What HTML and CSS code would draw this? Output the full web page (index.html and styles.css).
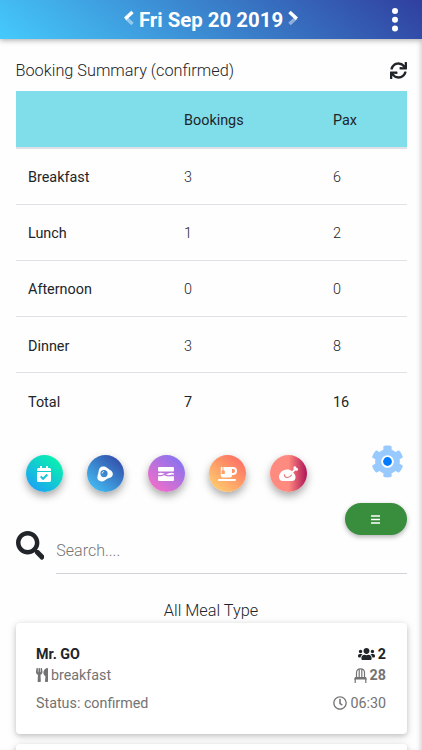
FILE: index.html
```html
<!DOCTYPE html>
<html lang="en">
<head>
    <meta charset="UTF-8">
    <meta name="viewport" content="width=device-width, initial-scale=1.0">
    <title>Booking Summary</title>
    <link rel="stylesheet" href="styles.css">
</head>
<body>
    <header class="topbar">
        <div class="date-nav">
            <svg class="chevron" viewBox="0 0 10 16"><path class="faded" d="M2 8l6.500 6" /><path d="M8.500 2 1.200 8.800" /></svg>
            <h1>Fri Sep 20 2019</h1>
            <svg class="chevron" viewBox="0 0 10 16"><path class="faded" d="M8 8l-6.500 6" /><path d="M1.500 2 8.800 8.800" /></svg>
        </div>
        <svg class="menu-dots" viewBox="0 0 6 24"><circle cx="3" cy="3" r="3" /><circle cx="3" cy="11.8" r="3" /><circle cx="3" cy="20.6" r="3" /></svg>
    </header>

    <main class="content">
        <div class="summary-head">
            <span>Booking Summary (confirmed)</span>
            <svg class="sync" viewBox="0 0 512 512"><path d="M440.65 12.57l4 82.77A247.16 247.16 0 0 0 255.83 8C134.73 8 33.91 94.92 12.29 209.82A12 12 0 0 0 24.09 224h49.05a12 12 0 0 0 11.67-9.26 175.91 175.91 0 0 1 317-56.94l-101.46-4.86a12 12 0 0 0-12.57 12v47.41a12 12 0 0 0 12 12H500a12 12 0 0 0 12-12V12a12 12 0 0 0-12-12h-47.37a12 12 0 0 0-11.98 12.57zM255.83 432a175.61 175.61 0 0 1-146-77.8l101.8 4.87a12 12 0 0 0 12.57-12v-47.4a12 12 0 0 0-12-12H12a12 12 0 0 0-12 12V500a12 12 0 0 0 12 12h47.35a12 12 0 0 0 12-12.6l-4.15-82.57A247.17 247.17 0 0 0 255.83 504c121.11 0 221.93-86.92 243.55-201.82a12 12 0 0 0-11.8-14.18h-49.05a12 12 0 0 0-11.67 9.26A175.86 175.86 0 0 1 255.83 432z" /></svg>
        </div>

        <table class="summary">
            <thead>
                <tr><th></th><th>Bookings</th><th>Pax</th></tr>
            </thead>
            <tbody>
                <tr><th>Breakfast</th><td>3</td><td>6</td></tr>
                <tr><th>Lunch</th><td>1</td><td>2</td></tr>
                <tr><th>Afternoon</th><td>0</td><td>0</td></tr>
                <tr><th>Dinner</th><td>3</td><td>8</td></tr>
                <tr><th>Total</th><th>7</th><th>16</th></tr>
            </tbody>
        </table>

        <div class="actions">
            <div class="filters">
                <button class="round all">
                    <svg width="14" height="16" viewBox="0 0 448 512"><path d="M436 160H12c-6.627 0-12-5.373-12-12v-36c0-26.51 21.49-48 48-48h48V12c0-6.627 5.373-12 12-12h40c6.627 0 12 5.373 12 12v52h128V12c0-6.627 5.373-12 12-12h40c6.627 0 12 5.373 12 12v52h48c26.51 0 48 21.49 48 48v36c0 6.627-5.373 12-12 12zM12 192h424c6.627 0 12 5.373 12 12v260c0 26.51-21.49 48-48 48H48c-26.51 0-48-21.49-48-48V204c0-6.627 5.373-12 12-12zm333.296 95.947l-28.169-28.398c-4.667-4.705-12.265-4.736-16.97-.068L194.12 364.665l-45.98-46.352c-4.667-4.705-12.266-4.736-16.971-.068l-28.397 28.17c-4.705 4.667-4.736 12.265-.068 16.97l82.601 83.269c4.667 4.705 12.265 4.736 16.97.068l142.953-141.805c4.705-4.667 4.736-12.265.068-16.97z" /></svg>
                </button>
                <button class="round breakfast">
                    <svg width="16" height="16" viewBox="0 0 16 16"><path fill-rule="evenodd" d="M3.2 1.6C4.3.4 6.300 0 8.300.8c2 .8 2.600 2 4.700 3.200 2 1.100 3 2.500 2.800 4.500-.2 2-1.500 3-3.600 3.500-2.200.5-3 1.300-4.600 2.500C5.600 16 2.200 15.700.8 13.300-.3 11.300.8 9.200 1.300 7.200 1.800 5 1.800 3.100 3.200 1.600zM7 4a3.600 3.600 0 1 0 0 7.200A3.600 3.600 0 0 0 7 4z" /><path class="shine" d="M5.200 7.500c0-1.200.7-1.900 1.900-1.900" /></svg>
                </button>
                <button class="round lunch">
                    <svg width="16" height="14" viewBox="0 0 16 14"><rect width="16" height="4.600" rx="1" /><path d="M0 6.500c1.500-1 3.600-.9 5.200-.2 1.800.8 3.800.8 5.600 0 1.700-.7 3.600-.8 5.200.2v1.200c-1.200-.3-2-.4-3 .1-1.800.9-3.300.2-5-.5-1.600-.6-2.600 0-4 .5C2.600 8.300 1.200 8 0 7.800z" /><path d="M0 9.200h3.500l2.500-1 3 1 2.500.4 2-.4H16V13a1 1 0 0 1-1 1H1a1 1 0 0 1-1-1z" /></svg>
                </button>
                <button class="round tea">
                    <svg width="19" height="14" viewBox="0 0 19 14"><path fill-rule="evenodd" d="M2.800 0h1.700v2.900L3.500 4.100v3h3.300v-3L5.400 2.900V0H15a4 4 0 0 1 0 8h-1v.500a2 2 0 0 1-2 2H4.800a2 2 0 0 1-2-2zM14 2v4h1a2 2 0 0 0 0-4z" /><rect y="12" width="18" height="1.900" rx=".9" /></svg>
                </button>
                <button class="round dinner">
                    <svg width="19" height="15" viewBox="0 0 19 15"><path d="M0 10.800C.2 6.500 4 3.400 8 3.400c2.200 0 3.700.6 5 1.800l1.700-1.700C14 1.800 14.600.3 15.800.3c.9 0 1.400.6 1.400 1.400 1.200-.1 1.800.7 1.800 1.500 0 1.300-1.400 2-2.900 1.400l-1.900 2.200c1.500 1.300 2.300 2.700 2.300 4.400 0 2.300-1.200 3.800-3.500 3.800H3.600C1.400 15-.1 13.300 0 10.800z" /><path class="wing" d="M5.200 8.300c.3 3.900 4.800 4.500 7.600.5" /></svg>
                </button>
            </div>
            <svg class="cog" viewBox="0 0 512 512"><path d="M487.4 315.7l-42.600-24.600c4.300-23.200 4.300-47 0-70.200l42.600-24.600c4.900-2.800 7.100-8.600 5.500-14-11.100-35.600-30-67.800-54.700-94.600-3.800-4.100-10-5.100-14.800-2.300L380.800 110c-17.900-15.400-38.500-27.300-60.800-35.100V25.800c0-5.600-3.900-10.500-9.400-11.700-36.700-8.200-74.300-7.800-109.200 0-5.500 1.200-9.400 6.100-9.400 11.700V75c-22.200 7.900-42.800 19.800-60.800 35.100L88.700 85.500c-4.900-2.800-11-1.900-14.800 2.300-24.700 26.700-43.600 58.900-54.700 94.600-1.700 5.400.6 11.200 5.500 14L67.300 221c-4.300 23.200-4.300 47 0 70.200l-42.600 24.600c-4.900 2.800-7.100 8.600-5.500 14 11.100 35.600 30 67.800 54.700 94.600 3.800 4.100 10 5.100 14.800 2.300l42.600-24.600c17.900 15.400 38.500 27.300 60.800 35.100v49.200c0 5.600 3.900 10.500 9.400 11.700 36.700 8.200 74.300 7.800 109.200 0 5.500-1.200 9.400-6.100 9.400-11.700v-49.200c22.200-7.900 42.800-19.800 60.800-35.100l42.600 24.600c4.900 2.800 11 1.900 14.800-2.300 24.700-26.700 43.600-58.900 54.700-94.600 1.500-5.500-.7-11.300-5.600-14.100z" /><circle class="ring" cx="256" cy="256" r="98" /><circle class="dot" cx="256" cy="256" r="68" /></svg>
        </div>

        <div class="list-button-row">
            <button class="list-button">
                <svg width="9" height="9" viewBox="0 0 9 9"><path d="M0 1h9M0 4.500h9M0 8h9" /></svg>
            </button>
        </div>

        <div class="search">
            <svg class="search-icon" viewBox="0 0 512 512"><path d="M505 442.700L405.300 343c-4.500-4.500-10.600-7-17-7H372c27.600-35.300 44-79.700 44-128C416 93.100 322.900 0 208 0S0 93.100 0 208s93.100 208 208 208c48.300 0 92.700-16.400 128-44v16.300c0 6.400 2.500 12.500 7 17l99.700 99.700c9.400 9.400 24.600 9.400 33.900 0l28.300-28.300c9.400-9.400 9.400-24.600.1-34zM208 336c-70.700 0-128-57.200-128-128 0-70.700 57.200-128 128-128 70.700 0 128 57.200 128 128 0 70.700-57.200 128-128 128z" /></svg>
            <input type="text" placeholder="Search....">
        </div>

        <h2 class="meal-title">All Meal Type</h2>

        <div class="card">
            <div class="card-row name">
                <span>Mr. GO</span>
                <span class="value"><svg width="17" height="14" viewBox="0 0 640 512"><path d="M96 224c35.300 0 64-28.700 64-64s-28.700-64-64-64-64 28.700-64 64 28.700 64 64 64zm448 0c35.300 0 64-28.700 64-64s-28.700-64-64-64-64 28.700-64 64 28.700 64 64 64zm32 32h-64c-17.600 0-33.500 7.100-45.100 18.600 40.300 22.100 68.900 62 75.100 109.400h66c17.700 0 32-14.300 32-32v-32c0-35.300-28.700-64-64-64zm-256 0c61.900 0 112-50.100 112-112S381.900 32 320 32 208 82.100 208 144s50.100 112 112 112zm76.800 32h-8.300c-20.800 10-43.900 16-68.500 16s-47.600-6-68.500-16h-8.300C179.600 288 128 339.600 128 403.200V432c0 26.500 21.500 48 48 48h288c26.500 0 48-21.500 48-48v-28.800c0-63.600-51.600-115.200-115.200-115.200zm-223.700-13.400C161.500 263.100 145.600 256 128 256H64c-35.300 0-64 28.700-64 64v32c0 17.700 14.300 32 32 32h65.900c6.300-47.400 34.900-87.300 75.200-109.400z" /></svg>2</span>
            </div>
            <div class="card-row meal">
                <span class="value"><svg width="12" height="14" viewBox="0 0 416 512" preserveAspectRatio="none"><path d="M207.900 15.200c.8 4.700 16.100 94.500 16.100 128.800 0 52.300-27.800 89.600-68.900 104.600L168 486.700c.7 13.700-10.200 25.300-24 25.300H80c-13.700 0-24.700-11.500-24-25.300l12.900-238.100C27.700 233.600 0 196.200 0 144 0 109.600 15.300 19.900 16.100 15.200 19.300-5.100 61.400-5.400 64 16.300v141.200c1.300 3.400 15.100 3.200 16 0 1.400-25.300 7.900-139.200 8-141.800 3.300-20.800 44.700-20.800 47.900 0 .2 2.700 6.600 116.500 8 141.800.9 3.200 14.800 3.400 16 0V16.300c2.600-21.600 44.800-21.400 48-1.100zm119.200 285.700l-15 185.100c-1.200 14 9.900 26 23.900 26h56c13.300 0 24-10.700 24-24V24c0-13.200-10.700-24-24-24-82.500 0-221.400 178.500-64.900 300.900z" /></svg>breakfast</span>
                <span class="value table-no"><svg width="13" height="15" viewBox="0 0 13 15"><path class="line" d="M2.500 9V4.700C2.500 2.200 3.900.8 6.500.8s4 1.400 4 3.900V9M5.200 1v8M7.800 1v8M1.200 11v4M11.800 11v4" /><path d="M1 9h11l1 2.600H0z" /></svg>28</span>
            </div>
            <div class="card-row status">
                <span>Status: confirmed</span>
                <span class="value"><svg width="14" height="14" viewBox="0 0 512 512"><path d="M256 8C119 8 8 119 8 256s111 248 248 248 248-111 248-248S393 8 256 8zm0 448c-110.500 0-200-89.500-200-200S145.500 56 256 56s200 89.500 200 200-89.500 200-200 200zm61.800-104.400l-84.900-61.700c-3.100-2.300-4.900-5.900-4.900-9.700V116c0-6.600 5.400-12 12-12h32c6.600 0 12 5.400 12 12v141.700l66.800 48.600c5.400 3.900 6.500 11.400 2.600 16.800L334.600 349c-3.900 5.300-11.400 6.500-16.800 2.600z" /></svg>06:30</span>
            </div>
        </div>
        <div class="card"></div>
    </main>
</body>
</html>
```
FILE: styles.css
```css
* {
    box-sizing: border-box;
}

body {
    font-family: Roboto, sans-serif;
    font-weight: 300;
    font-size: 16px;
    margin: 0;
    height: 750px;
    overflow: hidden;
    background-color: #fefefe;
    color: #212529;
}

svg {
    display: block;
    flex: none;
    fill: currentColor;
}

button {
    border: none;
    padding: 0;
    color: #fff;
    cursor: pointer;
}

.topbar {
    display: flex;
    align-items: center;
    height: 39px;
    padding: 0 24px 0 30px;
    background: linear-gradient(40deg, #45cafc, #303f9f);
    box-shadow: 0 2px 5px rgba(0, 0, 0, 0.26);
    color: #fff;
}

.date-nav {
    flex: 1;
    display: flex;
    align-items: center;
    justify-content: center;
    gap: 5px;
}

.date-nav h1 {
    margin: 0;
    font-size: 20.4px;
    font-weight: 700;
    line-height: 38px;
}

.chevron {
    width: 10px;
    height: 16px;
    margin-bottom: 4px;
    fill: none;
    stroke: #fff;
    stroke-width: 3.5;
}

.chevron .faded {
    opacity: 0.45;
}

.menu-dots {
    width: 6px;
    height: 24px;
}

.content {
    height: 711px;
    overflow: hidden;
    padding: 0 15.5px;
    box-shadow: inset -4px 0 4px -2px rgba(0, 0, 0, 0.15);
}

.summary-head {
    display: flex;
    align-items: center;
    justify-content: space-between;
    height: 52px;
    padding-top: 10px;
    font-size: 16.3px;
}

.sync {
    width: 17px;
    height: 17px;
}

.summary {
    width: 391px;
    border-collapse: collapse;
    table-layout: fixed;
    font-size: 14.4px;
    text-align: left;
}

.summary th,
.summary td {
    height: 56.2px;
    padding: 3px 12px 0 12.5px;
    border-top: 1px solid #dee2e6;
    font-weight: 300;
}

.summary th {
    font-weight: 400;
}

.summary thead th {
    height: 57px;
    background-color: #80deea;
    border-top: none;
    border-bottom: 2px solid #dee2e6;
}

.summary th:first-child {
    width: 156px;
}

.summary th:nth-child(2) {
    width: 149px;
}

.actions {
    display: flex;
    justify-content: space-between;
    padding: 16px 2.5px 0 10px;
    height: 74.5px;
}

.filters {
    display: flex;
    gap: 24px;
    padding-top: 10.5px;
}

.round {
    display: flex;
    align-items: center;
    justify-content: center;
    width: 37px;
    height: 37px;
    border-radius: 50%;
    box-shadow: 0 4px 9px rgba(0, 0, 0, 0.35);
}

.all {
    background: linear-gradient(40deg, #2096ff, #05ffa3);
}

.breakfast {
    background: linear-gradient(40deg, #45cafc, #303f9f);
}

.lunch {
    background: linear-gradient(40deg, #ff6ec4, #7873f5);
}

.tea {
    background: linear-gradient(40deg, #ffd86f, #fc6262);
}

.dinner {
    background: linear-gradient(90deg, #ff8a80 50%, #ad1457);
}

.shine {
    fill: none;
    stroke: #fff;
}

.wing {
    fill: none;
    stroke: #ed7178;
    stroke-width: 1.1;
}

.cog {
    width: 33px;
    height: 33px;
    color: #99caff;
}

.cog .ring {
    fill: #fff;
}

.cog .dot {
    fill: #007bff;
}

.list-button-row {
    display: flex;
    justify-content: flex-end;
}

.list-button {
    display: flex;
    align-items: center;
    justify-content: center;
    width: 61.5px;
    height: 32px;
    border-radius: 16px;
    background-color: #388e3c;
    box-shadow: 0 2px 5px rgba(0, 0, 0, 0.3);
}

.list-button svg {
    stroke: #fff;
    stroke-width: 1.5;
}

.search {
    display: flex;
    align-items: flex-start;
    gap: 12px;
    height: 39px;
}

.search-icon {
    width: 28.8px;
    height: 28.8px;
    margin-top: -4px;
}

.search input {
    flex: 1;
    min-width: 0;
    height: 39px;
    padding: 0 0 7px;
    border: none;
    border-bottom: 1px solid #ced4da;
    background: transparent;
    font: inherit;
}

.search input::placeholder {
    color: #757575;
}

.meal-title {
    margin: 26.5px 0 2px;
    font-size: 16.3px;
    font-weight: 300;
    line-height: 20px;
    text-align: center;
}

.card {
    height: 111px;
    margin-bottom: 10px;
    padding: 21px 20.5px 20px;
    border-radius: 4px;
    background-color: #fff;
    box-shadow: 0 2px 5px rgba(0, 0, 0, 0.16), 0 2px 10px rgba(0, 0, 0, 0.12);
}

.card-row {
    display: flex;
    justify-content: space-between;
    align-items: center;
    height: 21px;
    font-size: 14.3px;
    font-weight: 400;
    color: #747373;
}

.card-row .value {
    display: flex;
    align-items: center;
    gap: 3px;
}

.card-row.name {
    font-weight: 700;
    color: #212529;
}

.table-no {
    font-weight: 700;
}

.table-no .line {
    fill: none;
    stroke: currentColor;
    stroke-width: 1.2;
}

.card-row.status {
    margin-top: 7px;
}
```
